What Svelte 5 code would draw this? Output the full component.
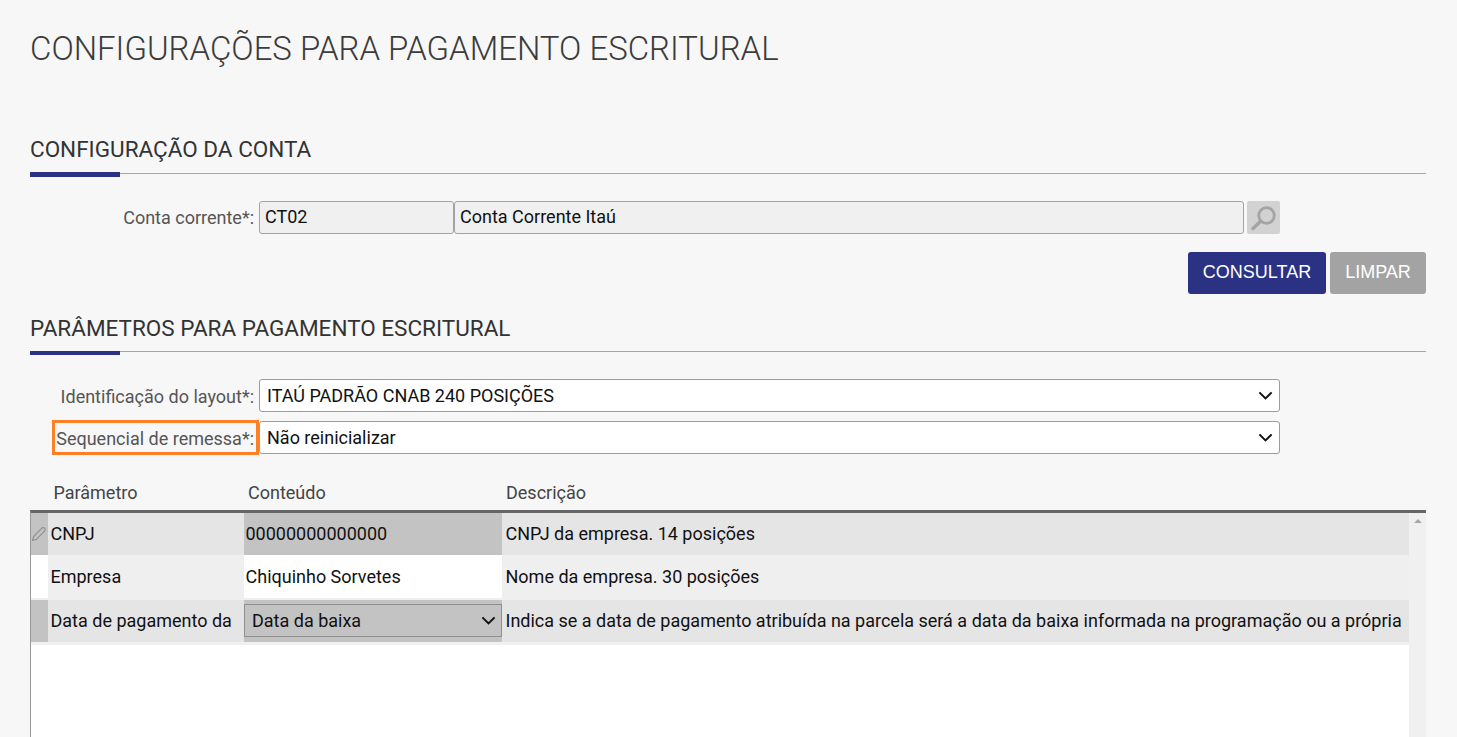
<script>
  const rows = [
    { tone: 'a', p: 'CNPJ', c: '00000000000000', d: 'CNPJ da empresa. 14 posições', edit: true },
    { tone: 'b', p: 'Empresa', c: 'Chiquinho Sorvetes', d: 'Nome da empresa. 30 posições' },
    { tone: 'a', p: 'Data de pagamento da', select: 'Data da baixa', d: 'Indica se a data de pagamento atribuída na parcela será a data da baixa informada na programação ou a própria' }
  ];
</script>

{#snippet chevron()}
  <svg class="chev" width="15" height="9" viewBox="0 0 15 9"><path d="M1.4 1.4 7.5 7.4 13.6 1.4" fill="none" stroke="#111" stroke-width="2"/></svg>
{/snippet}

<div class="page">
  <h1>CONFIGURAÇÕES PARA PAGAMENTO ESCRITURAL</h1>

  <section class="first">
    <h2>CONFIGURAÇÃO DA CONTA</h2>
    <div class="form-row">
      <span class="label">Conta corrente*:</span>
      <div class="input code">CT02</div>
      <div class="input name">Conta Corrente Itaú</div>
      <button class="lookup" aria-label="Pesquisar">
        <svg width="33" height="33" viewBox="0 0 33 33"><circle cx="19.5" cy="14.5" r="7.8" fill="none" stroke="#a4a4a4" stroke-width="2.8"/><path d="M13.6 20.2 6 27.5" stroke="#a4a4a4" stroke-width="3.4" stroke-linecap="round"/></svg>
      </button>
    </div>
    <div class="actions">
      <button class="btn primary">CONSULTAR</button>
      <button class="btn muted">LIMPAR</button>
    </div>
  </section>

  <section class="second">
    <h2>PARÂMETROS PARA PAGAMENTO ESCRITURAL</h2>
    <div class="select-rows">
      <div class="form-row">
        <span class="label tall">Identificação do layout*:</span>
        <div class="select">ITAÚ PADRÃO CNAB 240 POSIÇÕES {@render chevron()}</div>
      </div>
      <div class="form-row">
        <span class="label tall highlighted">Sequencial de remessa*:</span>
        <div class="select">Não reinicializar {@render chevron()}</div>
      </div>
    </div>

    <div class="table-head">
      <span>Parâmetro</span><span>Conteúdo</span><span>Descrição</span>
    </div>
    <div class="table">
      <div class="body">
        {#each rows as r}
          <div class="row {r.tone}">
            <div class="marker">
              {#if r.edit}
                <svg width="16" height="16" viewBox="0 0 16 16"><path d="M1.5 14.5 2.6 10.6 10.6 2.4C11.5 1.5 12.8 1.4 13.6 2.2 14.4 3 14.3 4.3 13.4 5.2L5.4 13.3Z" fill="none" stroke="#8e8e8e" stroke-width="1.1"/></svg>
              {/if}
            </div>
            <div class="cell param">{r.p}</div>
            <div class="cell content">
              {#if r.select}
                <div class="cell-select">{r.select} {@render chevron()}</div>
              {:else}
                {r.c}
              {/if}
            </div>
            <div class="cell desc">{r.d}</div>
          </div>
        {/each}
        <div class="strip"></div>
      </div>
      <div class="scroll"><span class="arrow"></span></div>
    </div>
  </section>
</div>

<style>
  :global(body) {
    margin: 0;
    background: #f7f7f7;
  }
  .page {
    box-sizing: border-box;
    height: 737px;
    overflow: hidden;
    padding: 30px 31px 0 30px;
    font-family: Roboto, "Liberation Sans", sans-serif;
    font-size: 18px;
    color: #111;
  }
  h1 {
    margin: 0;
    font-size: 32.95px;
    font-weight: 300;
    line-height: 37px;
    color: #3c3c3c;
  }
  section.first {
    padding-top: 55px;
  }
  section.second {
    padding-top: 21px;
  }
  h2 {
    position: relative;
    margin: 0 0 0 -0.5px;
    padding-left: 0.5px;
    font-size: 22.5px;
    font-weight: 400;
    line-height: 26px;
    color: #333;
    border-bottom: 1px solid #a6a6a6;
  }
  .first h2 { padding-top: 14px; padding-bottom: 11px; }
  .second h2 { padding-top: 0; padding-bottom: 10px; }
  h2::after {
    content: "";
    position: absolute;
    left: 0.5px;
    width: 90px;
    background: #2b3183;
  }
  .first h2::after { bottom: -4px; height: 5px; }
  .second h2::after { bottom: -4px; height: 4px; }
  .form-row {
    display: flex;
    align-items: stretch;
    height: 33px;
    width: 1250px;
  }
  .first .form-row { margin-top: 27px; }
  .label {
    box-sizing: border-box;
    width: 229px;
    flex: none;
    padding-right: 5px;
    text-align: right;
    line-height: 34px;
    color: #555;
    white-space: nowrap;
  }
  .label.tall { line-height: 36px; }
  .input {
    box-sizing: border-box;
    border: 1px solid #a3a3a3;
    border-radius: 3px;
    background: #f0f0f0;
    padding-left: 5px;
    line-height: 29px;
  }
  .code { width: 195px; flex: none; }
  .name { width: 790px; flex: none; }
  .lookup {
    width: 33px;
    height: 33px;
    flex: none;
    margin-left: 3px;
    padding: 0;
    border: 0;
    border-radius: 2px;
    background: #d2d2d2;
  }
  .lookup svg { display: block; }
  .actions {
    display: flex;
    justify-content: flex-end;
    gap: 4px;
    margin-top: 18px;
  }
  .btn {
    height: 42px;
    padding: 0 0 2px;
    border: 0;
    border-radius: 3px;
    color: #fff;
    font-family: "Liberation Sans", Arial, sans-serif;
    font-size: 18px;
  }
  .primary { width: 138px; background: #2b3183; }
  .muted { width: 96px; background: #a3a3a3; }
  .select-rows {
    display: flex;
    flex-direction: column;
    gap: 9px;
    margin-top: 27px;
  }
  .select {
    box-sizing: border-box;
    flex: none;
    display: flex;
    align-items: center;
    justify-content: space-between;
    width: 1021px;
    padding: 0 6px 0 7px;
    border: 1px solid #9c9c9c;
    border-radius: 3px;
    background: #fff;
  }
  .highlighted {
    position: relative;
  }
  .highlighted::after {
    content: "";
    position: absolute;
    left: 22px;
    top: -1px;
    width: 207px;
    height: 35px;
    box-sizing: border-box;
    border: 3px solid #ff7f27;
  }
  .table-head {
    display: grid;
    grid-template-columns: 218px 258px auto;
    height: 56px;
    box-sizing: border-box;
    padding: 29px 0 0 0;
    line-height: 20px;
    color: #444;
  }
  .table-head span:first-child { padding-left: 23.5px; }
  .table {
    display: flex;
    height: 240px;
    border-top: 3px solid #666;
    border-left: 1px solid #999;
  }
  .body {
    flex: 1;
    min-width: 0;
    background: #fff;
  }
  .row {
    display: grid;
    grid-template-columns: 17px 196px 258px 1fr;
    height: 42px;
    line-height: 42px;
  }
  .row.b { height: 45px; line-height: 44px; background: #efefef; }
  .cell { white-space: nowrap; overflow: hidden; }
  .param { padding-left: 2.5px; }
  .desc { padding-left: 3.5px; }
  .content { padding-left: 1.5px; }
  .a .marker, .a .content { background: #c3c3c3; }
  .a .param, .a .desc { background: #e5e5e5; }
  .b .marker, .b .content { background: #fff; height: 43px; }
  .b .param, .b .desc { background: #efefef; }
  .marker {
    display: flex;
    align-items: center;
  }
  .cell-select {
    box-sizing: border-box;
    display: flex;
    align-items: center;
    justify-content: space-between;
    height: 33px;
    margin: 4px 0 0 -1.5px;
    padding: 0 5px 0 7px;
    border: 1px solid #8f8f8f;
    background: #c3c3c3;
    line-height: 31px;
  }
  .strip { height: 3px; background: #f0f0f0; }
  .scroll {
    position: relative;
    flex: none;
    width: 17px;
    background: #f0f0f0;
  }
  .arrow {
    position: absolute;
    left: 5px;
    top: 6px;
    border-left: 4px solid transparent;
    border-right: 4px solid transparent;
    border-bottom: 4px solid #a8a8a8;
  }
  .chev { flex: none; }
</style>
